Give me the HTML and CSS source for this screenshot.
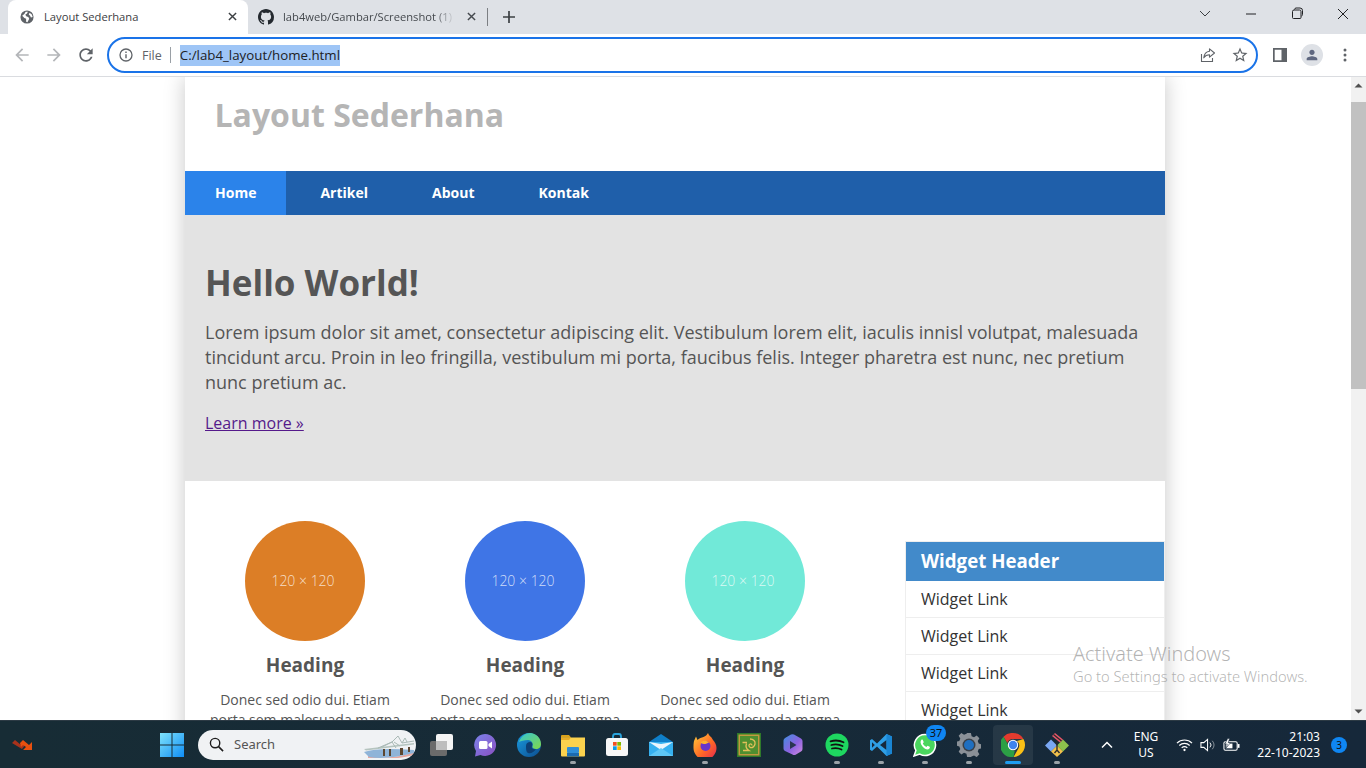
FILE: index.html
```html
<!DOCTYPE html>
<html lang="en">
<head>
    <meta charset="UTF-8">
    <meta name="viewport" content="width=device-width, initial-scale=1.0">
    <title>Layout Sederhana</title>
    <link rel="stylesheet" href="styles.css">
</head>
<body>
    <!-- browser window top -->
    <div class="tabbar">
        <div class="tab active">
            <svg class="tab-icon" viewBox="0 0 16 16"><circle cx="8" cy="8" r="7.5" fill="#5f6368"/><path d="M2.5 6.5 5 4.5l1.5-2.5L9 2 8 4 6 5.5 7.5 7.5 9.5 8l1 2-2 4-1.5-.5L7 10 5 9 2.5 6.5zM11 3l2.5 2 1 3-2 .5-1-2L10 5z" fill="#fff"/></svg>
            <span class="tab-title">Layout Sederhana</span>
            <svg class="tab-close" viewBox="0 0 10 10"><path d="M1 1l8 8M9 1l-8 8" stroke="#3c4043" stroke-width="1.6"/></svg>
        </div>
        <div class="tab other">
            <svg class="tab-icon" viewBox="0 0 16 16"><path fill="#24292f" d="M8 0C3.58 0 0 3.58 0 8c0 3.54 2.29 6.53 5.47 7.59.4.07.55-.17.55-.38 0-.19-.01-.82-.01-1.49-2.01.37-2.53-.49-2.69-.94-.09-.23-.48-.94-.82-1.13-.28-.15-.68-.52-.01-.53.63-.01 1.08.58 1.23.82.72 1.21 1.87.87 2.33.66.07-.52.28-.87.51-1.07-1.78-.2-3.64-.89-3.64-3.95 0-.87.31-1.59.82-2.15-.08-.2-.36-1.02.08-2.12 0 0 .67-.21 2.2.82.64-.18 1.32-.27 2-.27.68 0 1.36.09 2 .27 1.53-1.04 2.2-.82 2.2-.82.44 1.1.16 1.92.08 2.12.51.56.82 1.27.82 2.15 0 3.07-1.87 3.75-3.65 3.95.29.25.54.73.54 1.48 0 1.07-.01 1.93-.01 2.2 0 .21.15.46.55.38A8.013 8.013 0 0016 8c0-4.42-3.58-8-8-8z"/></svg>
            <span class="tab-title fade">lab4web/Gambar/Screenshot (1)</span>
            <svg class="tab-close" viewBox="0 0 10 10"><path d="M1 1l8 8M9 1l-8 8" stroke="#45494e" stroke-width="1.6"/></svg>
        </div>
        <div class="tab-divider"></div>
        <svg class="new-tab" viewBox="0 0 12 12"><path d="M6 0v12M0 6h12" stroke="#3c4043" stroke-width="1.7"/></svg>
        <div class="window-controls">
            <svg class="win-btn" viewBox="0 0 46 16"><path d="M18 5l5 5 5-5" fill="none" stroke="#3c4043" stroke-width="1"/></svg>
            <svg class="win-btn" viewBox="0 0 46 16"><path d="M18 8h10" stroke="#202124" stroke-width="1"/></svg>
            <svg class="win-btn" viewBox="0 0 46 16"><path d="M18.5 5.5q0-1.500 1.500-1.500h5.500q1.500 0 1.500 1.500v6q0 1-1 1h-6.500q-1 0-1-1zM20.500 3.500q.3-1.500 1.500-1.500h4q2.500 0 2.500 2.500v4q0 1.200-1 1.500" fill="none" stroke="#202124" stroke-width="1"/></svg>
            <svg class="win-btn" viewBox="0 0 46 16"><path d="M18 3l10 10M28 3l-10 10" stroke="#202124" stroke-width="1"/></svg>
        </div>
    </div>

    <div class="toolbar">
        <svg class="tool-icon first" viewBox="0 0 24 24"><path fill="#b4b6b9" d="M20 11H7.830l5.590-5.590L12 4l-8 8 8 8 1.410-1.410L7.830 13H20v-2z"/></svg>
        <svg class="tool-icon" viewBox="0 0 24 24"><path fill="#b4b6b9" d="M4 11h12.170l-5.590-5.590L12 4l8 8-8 8-1.410-1.410L16.170 13H4v-2z"/></svg>
        <svg class="tool-icon" viewBox="0 0 24 24"><path fill="#5f6368" d="M17.650 6.350C16.200 4.900 14.210 4 12 4c-4.420 0-7.990 3.580-7.990 8s3.570 8 7.990 8c3.730 0 6.840-2.550 7.730-6h-2.080c-.82 2.330-3.040 4-5.650 4-3.310 0-6-2.690-6-6s2.690-6 6-6c1.660 0 3.140.69 4.220 1.780L13 11h7V4l-2.350 2.350z"/></svg>
        <div class="omnibox">
            <svg class="info-icon" viewBox="0 0 14 14"><circle cx="7" cy="7" r="6" fill="none" stroke="#5f6368" stroke-width="1.300"/><path d="M7 6.200v4M7 3.600v1.400" stroke="#5f6368" stroke-width="1.400"/></svg>
            <span class="scheme">File</span>
            <span class="scheme-line"></span>
            <span class="url">C:/lab4_layout/home.html</span>
            <svg class="share-icon" viewBox="0 0 16 16"><path d="M1.500 7v7.500h11V11" fill="none" stroke="#5f6368" stroke-width="1.100"/><path d="M9.500 1.800 14.500 6l-5 4.200V7.800c-2.600 0-4.400 1-5.700 3C4.200 7.300 6.300 4.700 9.500 4.300z" fill="none" stroke="#5f6368" stroke-width="1.100" stroke-linejoin="round"/></svg>
            <svg class="star-icon" viewBox="0 0 24 24"><path fill="#5f6368" d="M22 9.240l-7.190-.62L12 2 9.190 8.630 2 9.240l5.460 4.730L5.820 21 12 17.270 18.180 21l-1.630-7.030L22 9.240zM12 15.400l-3.760 2.270 1-4.280-3.320-2.880 4.380-.38L12 6.100l1.710 4.040 4.380.38-3.320 2.880 1 4.280L12 15.400z"/></svg>
        </div>
        <svg class="panel-icon" viewBox="0 0 14 14"><path fill-rule="evenodd" fill="#5f6368" d="M0 0h14v14H0zM1.700 1.700v10.600h6.800V1.700z"/></svg>
        <div class="avatar">
            <svg viewBox="0 0 24 24"><path fill="#5f6880" d="M12 12c2.210 0 4-1.790 4-4s-1.790-4-4-4-4 1.790-4 4 1.790 4 4 4zm0 2c-2.670 0-8 1.340-8 4v2h16v-2c0-2.660-5.330-4-8-4z"/></svg>
        </div>
        <svg class="menu-icon" viewBox="0 0 4 14"><circle cx="2" cy="2" r="1.500" fill="#5f6368"/><circle cx="2" cy="7" r="1.500" fill="#5f6368"/><circle cx="2" cy="12" r="1.500" fill="#5f6368"/></svg>
    </div>

    <!-- the page itself -->
    <div class="viewport">
        <div class="page">
            <div class="container">
                <header class="site-header">
                    <h1>Layout Sederhana</h1>
                </header>
                <nav class="site-nav">
                    <a class="current" href="#">Home</a>
                    <a href="#">Artikel</a>
                    <a href="#">About</a>
                    <a href="#">Kontak</a>
                </nav>
                <section class="hero">
                    <h2>Hello World!</h2>
                    <p>Lorem ipsum dolor sit amet, consectetur adipiscing elit. Vestibulum lorem elit, iaculis innisl volutpat, malesuada tincidunt arcu. Proin in leo fringilla, vestibulum mi porta, faucibus felis. Integer pharetra est nunc, nec pretium nunc pretium ac.</p>
                    <a class="more" href="#">Learn more &raquo;</a>
                </section>
                <div class="content">
                    <div class="columns">
                        <div class="col">
                            <div class="circle orange">120 &times; 120</div>
                            <h3>Heading</h3>
                            <p>Donec sed odio dui. Etiam porta sem malesuada magna mollis euismod.</p>
                        </div>
                        <div class="col">
                            <div class="circle blue">120 &times; 120</div>
                            <h3>Heading</h3>
                            <p>Donec sed odio dui. Etiam porta sem malesuada magna mollis euismod.</p>
                        </div>
                        <div class="col">
                            <div class="circle teal">120 &times; 120</div>
                            <h3>Heading</h3>
                            <p>Donec sed odio dui. Etiam porta sem malesuada magna mollis euismod.</p>
                        </div>
                    </div>
                    <aside class="widget">
                        <h4>Widget Header</h4>
                        <a href="#">Widget Link</a>
                        <a href="#">Widget Link</a>
                        <a href="#">Widget Link</a>
                        <a href="#">Widget Link</a>
                    </aside>
                </div>
            </div>
            <div class="activate">
                <div class="activate-title">Activate Windows</div>
                <div class="activate-sub">Go to Settings to activate Windows.</div>
            </div>
        </div>
        <div class="scrollbar">
            <svg class="arrow" viewBox="0 0 15 17"><path d="M3.500 10.500h8l-4-4z" fill="#505050"/></svg>
            <div class="track"><div class="thumb"></div></div>
            <svg class="arrow" viewBox="0 0 15 17"><path d="M3.500 6.500h8l-4 4z" fill="#505050"/></svg>
        </div>
    </div>

    <!-- windows taskbar -->
    <div class="taskbar">
        <svg class="tray-app" viewBox="0 0 24 16"><path d="M1 6l3-3 6 5 2-3 3 2-4 5z" fill="#a8321c"/><path d="M9 6l3-3 6 5 3-3v8H12l3-3-3-2-2 2z" fill="#e8500f"/></svg>
        <div class="task-btn start">
            <svg class="task-icon" viewBox="0 0 24 24"><defs><linearGradient id="win" x1="0" y1="0" x2="1" y2="1"><stop offset="0" stop-color="#7fe3fb"/><stop offset="1" stop-color="#0f8df5"/></linearGradient></defs><path fill="url(#win)" d="M0 0h11.500v11.500H0zM12.500 0H24v11.500H12.500zM0 12.500h11.500V24H0zM12.500 12.500H24V24H12.500z"/></svg>
        </div>
        <div class="searchbox">
            <svg class="search-icon" viewBox="0 0 16 16"><circle cx="6.500" cy="6.500" r="5" fill="none" stroke="#1d1d1d" stroke-width="1.500"/><path d="M10.200 10.200 15 15" stroke="#1d1d1d" stroke-width="1.700"/></svg>
            <span>Search</span>
            <svg class="bridge" viewBox="0 0 52 24"><path d="M4 21q22 6 46-3v3q-24 6-46 3z" fill="#e7a8a0"/><path d="M0 18q14-5 50-2v3Q22 26 5 23z" fill="#8fb4d8"/><path d="M0 15 50 9v1.500L2 16.500z" fill="#b5c4bf"/><path d="M14 14l14-6 6-6 4 7 12-2M18 13l10-5 4 6M30 8l6 4M38 9l3-5 2 4" fill="none" stroke="#a9b9b5" stroke-width="1"/><path d="M19 15h2v7h-2zM25 15h2v7h-2zM36 14h3v7h-3zM44 13h2v5h-2z" fill="#5c4630"/></svg>
        </div>
        <div class="task-btn">
            <svg class="task-icon" viewBox="0 0 24 24"><rect x="1" y="8" width="17" height="15" rx="2" fill="#6b6b6b"/><rect x="7" y="1" width="17" height="16" rx="2" fill="#f4f4f4"/><rect x="7" y="8" width="11" height="9" fill="#bdbdbd"/></svg>
        </div>
        <div class="task-btn">
            <svg class="task-icon" viewBox="0 0 24 24"><defs><linearGradient id="meet" x1="0" y1="0" x2="1" y2="1"><stop offset="0" stop-color="#7b83eb"/><stop offset="1" stop-color="#8a4fc0"/></linearGradient></defs><path fill="url(#meet)" d="M12 1a11 11 0 1 1-4.500 21L2 23.500 3 18A11 11 0 0 1 12 1z"/><rect x="6" y="8" width="8.500" height="8" rx="1.500" fill="#fff"/><path d="M15.500 11 19 8.500v7L15.500 13z" fill="#fff"/></svg>
        </div>
        <div class="task-btn">
            <svg class="task-icon" viewBox="0 0 24 24"><defs><linearGradient id="edge1" x1="0" y1="0" x2="1" y2="1"><stop offset="0" stop-color="#37c6d0"/><stop offset="1" stop-color="#7fd84a"/></linearGradient><linearGradient id="edge2" x1="0" y1="0" x2="1" y2="1"><stop offset="0" stop-color="#1a9be0"/><stop offset="1" stop-color="#0c4d8f"/></linearGradient></defs><circle cx="12" cy="12" r="12" fill="url(#edge2)"/><path d="M2 9C4 3 9 0 13 0c6 0 11 5 11 11 0 3-2 5-5 5-2 0-4-1-3.500-2.500C16.500 11 15 7 11 7 7 7 4 8 2 9z" fill="url(#edge1)"/><path d="M9 13c0-3 2-4 4-4s3 2 2 4c-1 2 1 4 4 3-2 3-5 5-8 4-2-1-2-4-2-7z" fill="#0d3f74"/></svg>
        </div>
        <div class="task-btn">
            <svg class="task-icon" viewBox="0 0 24 24"><path d="M0 3q0-1 1-1h7l2 2.500h-10z" fill="#d9a21b"/><path d="M0 4.500h24v18q0 1-1 1H1q-1 0-1-1z" fill="#fbd24e"/><path d="M0 4.500h10l-2 2.500H0z" fill="#e8ad26"/><rect x="6" y="14" width="12" height="6" rx="1" fill="#2f8fd8"/><rect x="6" y="20" width="12" height="3.500" fill="#1b6bb0"/></svg>
            <span class="dot"></span>
        </div>
        <div class="task-btn">
            <svg class="task-icon" viewBox="0 0 24 24"><path d="M8 6V3.500Q8 1 10 1h4q2 0 2 2.500V6" fill="none" stroke="#2aa4dc" stroke-width="1.800"/><rect x="1" y="5" width="22" height="18" rx="2.500" fill="#f7f7f7"/><rect x="8" y="9" width="3.700" height="3.700" fill="#f25022"/><rect x="12.300" y="9" width="3.700" height="3.700" fill="#7fba00"/><rect x="8" y="13.300" width="3.700" height="3.700" fill="#0a9be8"/><rect x="12.300" y="13.300" width="3.700" height="3.700" fill="#ffb900"/></svg>
        </div>
        <div class="task-btn">
            <svg class="task-icon" viewBox="0 0 24 24"><path d="M0 9 12 1l12 8v14H0z" fill="#0f7fc9"/><path d="M0 9h24v14H0z" fill="#35b0ef"/><path d="M0 9l12 8 12-8-12 2z" fill="#eaf6fd"/><path d="M0 23l12-8 12 8z" fill="#5ec7f5"/></svg>
        </div>
        <div class="task-btn">
            <svg class="task-icon" viewBox="0 0 24 24"><defs><linearGradient id="fox" x1="0" y1="0" x2="1" y2="1"><stop offset="0" stop-color="#ffcf3c"/><stop offset=".55" stop-color="#ff6a26"/><stop offset="1" stop-color="#e3254f"/></linearGradient></defs><path d="M1 8 3 3.500 4.500 7c2-2 4-2.500 6-3 2-.8 3.500-2 4.500-4 .5 2 2 3 3.500 4.500l1.500 2.500c2 2 3.500 5 3.500 8a11.500 11.500 0 0 1-23 0C.5 13 .5 10 1 8z" fill="url(#fox)"/><circle cx="12.500" cy="13" r="5" fill="#6a35c9"/><path d="M7.500 9.500c2-2 6-2.500 8.500 0l-3.500 1.500c-2 0-4 0-5-1.500z" fill="#ffb02e"/></svg>
            <span class="dot"></span>
        </div>
        <div class="task-btn">
            <svg class="task-icon" viewBox="0 0 24 24"><rect width="24" height="24" fill="#2f7a2a"/><rect x="1.500" y="1.500" width="21" height="21" fill="#c29a3e"/><rect x="3" y="3" width="18" height="18" fill="#4f8f30"/><path d="M13 6c3.500 0 5.500 2.500 5 5-.5 2.500-2.500 4-4.500 3.500-1.800-.5-2-2.500-.8-3.300 1.300-.7 2.500.2 2.100 1.300M9.500 10.500c-1 2.800 0 5.500 2.500 7H6M5.500 9.500h4.500" fill="none" stroke="#e2c05a" stroke-width="1.300"/></svg>
        </div>
        <div class="task-btn">
            <svg class="task-icon" viewBox="0 0 24 24"><defs><linearGradient id="m365" x1="0" y1="0" x2="1" y2="1"><stop offset="0" stop-color="#3d8fe0"/><stop offset=".55" stop-color="#8c63e0"/><stop offset="1" stop-color="#d28be0"/></linearGradient></defs><path d="M10 1.500q1.500-.7 3 0l7 4q1.500 1 1.500 2.500v8q0 1.500-1.500 2.500l-5 3q-2 1-3.500 0L4 18q-1.500-1-1.500-2.500v-8Q2.500 6 4 5z" fill="url(#m365)"/><path d="M9 8l6.500 4L9 16z" fill="#2a3550"/></svg>
        </div>
        <div class="task-btn">
            <svg class="task-icon" viewBox="0 0 24 24"><circle cx="12" cy="12" r="11.500" fill="#1ed760"/><path d="M5.500 8.300c4.300-1.200 9-1 13 1M6.300 12c3.700-1 7.600-.8 11.200 1M7 15.500c3.200-.8 6.300-.6 9.500 1" fill="none" stroke="#111" stroke-width="1.800" stroke-linecap="round"/></svg>
            <span class="dot"></span>
        </div>
        <div class="task-btn">
            <svg class="task-icon" viewBox="0 0 24 24"><path d="M17.500 1 23 3.500v17L17.500 23 8 13.500l-5 4.500-2-1.200V7.200L3 6l5 4.500z" fill="#2f9fe6"/><path d="M17.500 7 11 12l6.500 5z" fill="#17283a"/><path d="M3 9.300v5.400L5.800 12z" fill="#17283a"/><path d="M17.500 1 23 3.500v17L17.500 23z" fill="#1a86d4"/></svg>
            <span class="dot"></span>
        </div>
        <div class="task-btn">
            <svg class="task-icon" viewBox="0 0 24 24"><path d="M12 1.500a10.500 10.500 0 1 1-5.200 19.600L1 23l1.900-5.600A10.500 10.500 0 0 1 12 1.500z" fill="#4ad65e" stroke="#fff" stroke-width="1.500"/><path d="M8.500 6.800c-1.500 1.500-1.200 4 1 6.700s5 3.500 6.500 2.500c1-.7 1-1.800.7-2.200l-2.200-1.100-1.100 1.200c-1.500-.5-3-2-3.600-3.600l1-1.100-1-2.300c-.4-.3-1-.4-1.300-.1z" fill="#fff"/></svg>
            <span class="count">37</span>
            <span class="dot"></span>
        </div>
        <div class="task-btn">
            <svg class="task-icon" viewBox="0 0 24 24"><path d="M10 0h4l.7 3.200 2.500 1 2.800-1.700 2.800 2.800-1.700 2.800 1 2.500 2.900.7v4l-2.900.7-1 2.500 1.700 2.800-2.800 2.800-2.800-1.700-2.500 1L14 24h-4l-.7-3.200-2.500-1L4 21.500 1.200 18.700l1.700-2.800-1-2.500L-1 12.700v-4l2.900-.7 1-2.500L1.200 2.700 4 0l2.800 1.700 2.500-1z" fill="#8a9097" transform="translate(.5 0) scale(.96 1)"/><circle cx="12" cy="12" r="6.500" fill="#3a4048"/><circle cx="12" cy="12" r="5" fill="#1f6fc0"/></svg>
            <span class="dot"></span>
        </div>
        <div class="task-btn selected">
            <svg class="task-icon" viewBox="0 0 24 24"><path d="M12 0a12 12 0 0 1 10.400 6H12a6 6 0 0 0-5.700 4L2.500 3.700A12 12 0 0 1 12 0z" fill="#e33b2e"/><path d="M22.400 6A12 12 0 0 1 12.500 24l5-8.700A6 6 0 0 0 16 8z" fill="#fbc116"/><path d="M2.500 3.700 7.800 13a5 5 0 0 0 6 4.400L12.500 24A12 12 0 0 1 2.500 3.700z" fill="#2c9f45"/><circle cx="12" cy="12" r="5.200" fill="#fff"/><circle cx="12" cy="12" r="4.200" fill="#3f84ee"/></svg>
            <span class="dot long"></span>
        </div>
        <div class="task-btn">
            <svg class="task-icon" viewBox="0 0 24 24"><path d="M0 12.500l6-6 6 6-6 6z" fill="#7aa7f2"/><path d="M12 12.500l6-6 6 6-6 6z" fill="#8cc14c"/><path d="M6 18.500l6-6 6 6-6 5.500z" fill="#f2c14c"/><path d="M7 3l3-3 8 6.500-3 3z" fill="#e8566a"/><path d="M8.500 1.500 16.500 8M12 8v9M9.500 20l2.500-3 2.500 3" fill="none" stroke="#2b2b2b" stroke-width="1.400"/></svg>
            <span class="dot"></span>
        </div>
        <div class="tray">
            <svg class="tray-chevron" viewBox="0 0 12 8"><path d="M1 6.500 6 1.500l5 5" fill="none" stroke="#fff" stroke-width="1.500"/></svg>
            <div class="lang">ENG<br>US</div>
            <svg class="tray-wifi" viewBox="0 0 18 14"><path d="M1 5a11.500 11.500 0 0 1 16 0M3.500 7.500a8 8 0 0 1 11 0M6 10a4.500 4.500 0 0 1 6 0" fill="none" stroke="#fff" stroke-width="1.200"/><circle cx="9" cy="12.300" r="1.200" fill="#fff"/></svg>
            <svg class="tray-sound" viewBox="0 0 18 14"><path d="M1 4.500h3L8 1v12L4 9.500H1z" fill="none" stroke="#fff" stroke-width="1.100"/><path d="M10.500 4.500a3.500 3.500 0 0 1 0 5" fill="none" stroke="#fff" stroke-width="1"/><path d="M13 2.500a7 7 0 0 1 0 9" fill="none" stroke="#8a949b" stroke-width="1"/></svg>
            <svg class="tray-battery" viewBox="0 0 18 14"><rect x="1" y="3.500" width="14" height="9" rx="1.500" fill="none" stroke="#fff" stroke-width="1.100"/><rect x="15.500" y="6" width="2" height="4" fill="#fff"/><rect x="3" y="5.500" width="7" height="5" fill="#fff"/><path d="M5 0 2 6h2.500L3.500 10 8 4.500H5.500L7 0z" fill="#fff" stroke="#17283a" stroke-width=".6"/></svg>
            <div class="clock">21:03<br>22-10-2023</div>
            <span class="notify">3</span>
        </div>
    </div>
</body>
</html>
```

FILE: styles.css
```css
* {
    box-sizing: border-box;
}

html, body {
    height: 100%;
}

body {
    margin: 0;
    width: 1366px;
    height: 768px;
    overflow: hidden;
    display: flex;
    flex-direction: column;
    font-family: "Open Sans", "Noto Sans", sans-serif;
    background: #fff;
}

/* tabs */
.tabbar {
    height: 34px;
    flex-shrink: 0;
    display: flex;
    align-items: flex-end;
    padding-left: 8px;
    background: #dee1e6;
}

.tab {
    height: 26px;
    padding-bottom: 1px;
    display: flex;
    align-items: center;
    font-size: 11.200px;
    color: #3c4043;
}

.tab.active {
    width: 240px;
    height: 34px;
    padding: 0 11px 1px 12px;
    background: #fff;
    border-radius: 8px 8px 0 0;
}

.tab.other {
    width: 239px;
    height: 34px;
    padding: 0 11px 1px 10px;
    color: #45494e;
}

.tab-icon {
    width: 16px;
    height: 16px;
    flex-shrink: 0;
}

.tab.active .tab-icon {
    width: 14px;
    height: 14px;
}

.tab-title {
    flex: 1;
    margin-left: 10px;
    white-space: nowrap;
    overflow: hidden;
}

.tab.other .tab-title {
    margin-left: 9px;
}

.tab-title.fade {
    -webkit-mask-image: linear-gradient(to right, #000 88%, transparent 100%);
    mask-image: linear-gradient(to right, #000 88%, transparent 100%);
    margin-right: 12px;
}

.tab-close {
    width: 9px;
    height: 9px;
    flex-shrink: 0;
}

.tab-divider {
    width: 1px;
    height: 18px;
    margin: 0 0 8px 0;
    background: #7c7f83;
}

.new-tab {
    width: 12px;
    height: 12px;
    margin: 0 0 11px 15px;
}

.window-controls {
    margin-left: auto;
    display: flex;
    height: 34px;
    padding-top: 6px;
}

.win-btn {
    width: 46px;
    height: 16px;
}

/* address bar */
.toolbar {
    height: 43px;
    flex-shrink: 0;
    display: flex;
    align-items: center;
    background: #fff;
    border-bottom: 1px solid #dadce0;
}

.tool-icon {
    width: 20px;
    height: 20px;
    margin-right: 12px;
}

.tool-icon.first {
    margin-left: 12px;
}

.omnibox {
    width: 1151px;
    height: 36px;
    margin-left: -1px;
    padding: 0 7px 0 10px;
    display: flex;
    align-items: center;
    border: 2px solid #1a73e8;
    border-radius: 18px;
    font-size: 13.300px;
    color: #202124;
}

.info-icon {
    width: 14px;
    height: 14px;
}

.scheme {
    margin-left: 9px;
    font-size: 12.500px;
    color: #5f6368;
}

.scheme-line {
    width: 1px;
    height: 16px;
    margin: 0 9px 0 8px;
    background: #9aa0a6;
}

.url {
    height: 21px;
    line-height: 21px;
    background: #9ec5f6;
}

.share-icon {
    width: 16px;
    height: 16px;
    margin-left: auto;
}

.star-icon {
    width: 18px;
    height: 18px;
    margin-left: 15px;
}

.panel-icon {
    width: 14px;
    height: 14px;
    margin-left: 15px;
}

.avatar {
    width: 22px;
    height: 22px;
    margin-left: 14px;
    padding: 3px;
    border-radius: 50%;
    background: #dee1e6;
}

.avatar svg {
    display: block;
}

.menu-icon {
    width: 4px;
    height: 14px;
    margin-left: 20px;
}

/* page */
.viewport {
    flex: 1;
    min-height: 0;
    display: flex;
}

.page {
    position: relative;
    flex: 1;
    padding-right: 1px;
    overflow: hidden;
}

.container {
    width: 980px;
    margin: 0 auto;
    background: #fff;
    box-shadow: 0 0 20px rgba(0, 0, 0, 0.22);
}

.site-header {
    height: 94px;
    padding: 16px 30px 0 29.500px;
}

.site-header h1 {
    margin: 0;
    font-size: 32px;
    line-height: 44px;
    font-weight: 700;
    color: #b5b5b5;
}

.site-nav {
    height: 44px;
    display: flex;
    gap: 4px;
    background: #1f5faa;
}

.site-nav a {
    padding: 0 30px;
    line-height: 44px;
    font-size: 14px;
    font-weight: 700;
    color: #fff;
    text-decoration: none;
}

.site-nav a.current {
    background: #2b83ea;
}

.hero {
    height: 266px;
    padding: 44px 20px 0;
    background: #e3e3e3;
    color: #555;
}

.hero h2 {
    margin: 0 0 12px;
    font-size: 35px;
    line-height: 48px;
    font-weight: 700;
}

.hero p {
    margin: 0 0 17px;
    padding-top: 1px;
    font-size: 18px;
    line-height: 25px;
}

.more {
    font-size: 16px;
    line-height: 22px;
    color: #551a8b;
}

.content {
    display: flex;
    align-items: flex-start;
    padding: 40px 0 40px 10px;
}

.columns {
    width: 660px;
    display: flex;
}

.col {
    width: 220px;
    padding: 0 10px;
    text-align: center;
    color: #555;
}

.circle {
    width: 120px;
    height: 120px;
    margin: 0 auto;
    padding-right: 4px;
    border-radius: 50%;
    font-size: 14px;
    font-weight: 300;
    line-height: 120px;
    color: rgba(255, 255, 255, 0.75);
}

.orange {
    background: #dc7e26;
}

.blue {
    background: #3f75e6;
}

.teal {
    background: #71e9d8;
}

.col h3 {
    margin: 10px 0 11px;
    font-size: 19px;
    line-height: 28px;
    font-weight: 700;
}

.col p {
    margin: 0;
    font-size: 14px;
    line-height: 20px;
}

.widget {
    width: 260px;
    margin: 20px 0 0 50px;
    border: 1px solid #eee;
}

.widget h4 {
    margin: 0;
    padding: 0 15px;
    font-size: 18.700px;
    line-height: 38px;
    height: 39px;
    font-weight: 700;
    color: #fff;
    background: #428aca;
}

.widget a {
    display: block;
    height: 37px;
    padding: 0 15px;
    font-size: 16px;
    line-height: 36px;
    color: #333;
    text-decoration: none;
    border-bottom: 1px solid #eee;
}

.activate {
    position: absolute;
    left: 1073px;
    top: 564px;
    font-family: "Noto Sans", sans-serif;
    font-weight: 300;
    color: rgba(130, 130, 130, 0.6);
}

.activate-title {
    font-size: 19.900px;
    line-height: 26px;
}

.activate-sub {
    font-size: 14.700px;
    line-height: 19px;
}

.scrollbar {
    width: 15px;
    flex-shrink: 0;
    display: flex;
    flex-direction: column;
    background: #f1f1f1;
}

.arrow {
    width: 15px;
    height: 17px;
    flex-shrink: 0;
}

.track {
    flex: 1;
    padding-top: 8px;
}

.thumb {
    height: 287px;
    background: #c1c1c1;
}

/* taskbar */
.taskbar {
    height: 48px;
    flex-shrink: 0;
    display: flex;
    align-items: center;
    padding-left: 11px;
    background: linear-gradient(to right, #172c35, #16283a);
    color: #fff;
    font-family: "Noto Sans", sans-serif;
    border-top: 1px solid #2c3a44;
}

.tray-app {
    width: 24px;
    height: 16px;
    margin-right: 115px;
}

.task-btn {
    position: relative;
    width: 44px;
    height: 40px;
    flex-shrink: 0;
    display: flex;
    align-items: center;
    justify-content: center;
    border-radius: 4px;
}

.task-icon {
    width: 24px;
    height: 24px;
}

.task-btn.selected {
    width: 40px;
    margin: 0 2px;
    background: rgba(255, 255, 255, 0.07);
}

.dot {
    position: absolute;
    left: 19px;
    bottom: 1px;
    width: 6px;
    height: 3px;
    border-radius: 2px;
    background: #9aa2a8;
}

.dot.long {
    left: 12px;
    width: 16px;
    background: #1f9cf0;
}

.count {
    position: absolute;
    left: 23px;
    top: 0;
    width: 20px;
    height: 16px;
    border-radius: 8px;
    background: #0f86f2;
    color: #111;
    font-size: 11px;
    line-height: 16px;
    text-align: center;
}

.searchbox {
    width: 218px;
    height: 30px;
    margin: 0 3px 0 4px;
    padding: 0 0 0 11px;
    display: flex;
    align-items: center;
    flex-shrink: 0;
    border-radius: 15px;
    background: #f0f2f4;
    color: #555;
    font-size: 13px;
    line-height: 16px;
    overflow: hidden;
}

.searchbox span {
    padding-bottom: 2px;
}

.search-icon {
    width: 15px;
    height: 15px;
    margin-right: 10px;
}

.bridge {
    width: 52px;
    height: 24px;
    margin: 3px 0 0 auto;
}

.tray {
    flex: 1;
    display: flex;
    align-items: center;
    font-size: 12px;
    line-height: 16px;
}

.tray-chevron {
    width: 12px;
    height: 8px;
    margin-left: 22px;
}

.lang {
    width: 40px;
    margin-left: 13px;
    text-align: center;
}

.tray-wifi {
    width: 17px;
    height: 14px;
    margin-left: 10px;
}

.tray-sound {
    width: 17px;
    height: 14px;
    margin-left: 7px;
}

.tray-battery {
    width: 17px;
    height: 14px;
    margin-left: 6px;
}

.clock {
    width: 80px;
    margin-left: 0;
    text-align: right;
}

.notify {
    width: 16px;
    height: 16px;
    margin-left: 11px;
    border-radius: 50%;
    background: #0f86f2;
    color: #111;
    font-size: 10px;
    line-height: 16px;
    text-align: center;
}
```
